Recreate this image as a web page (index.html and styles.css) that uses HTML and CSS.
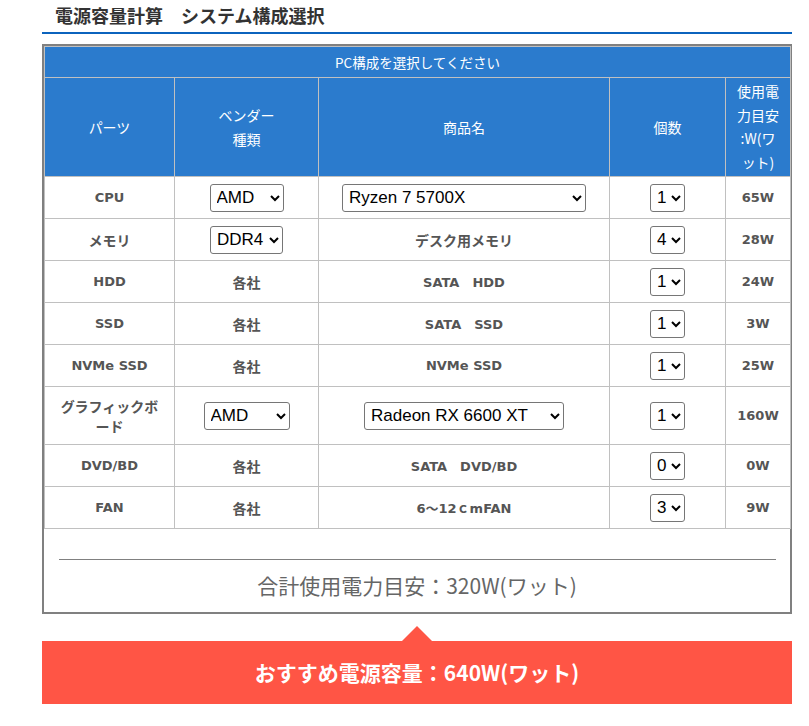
FILE: index.html
```html
<!DOCTYPE html>
<html lang="ja">
<head>
<meta charset="utf-8">
<title>電源容量計算</title>
<link rel="stylesheet" href="styles.css">
</head>
<body>
<div class="page">
  <h2 class="title">電源容量計算　システム構成選択</h2>
  <div class="calc-box">
    <table class="parts">
      <colgroup>
        <col class="c-part"><col class="c-vendor"><col class="c-name"><col class="c-qty"><col class="c-watt">
      </colgroup>
      <thead>
        <tr class="caption-row"><th colspan="5">PC構成を選択してください</th></tr>
        <tr class="head-row">
          <th>パーツ</th>
          <th>ベンダー<br>種類</th>
          <th>商品名</th>
          <th>個数</th>
          <th class="watt-head">使用電<br>力目安<br>:W(ワ<br>ット)</th>
        </tr>
      </thead>
      <tbody>
        <tr>
          <td>CPU</td>
          <td><select class="sel sel-vendor"><option>AMD</option><option>Intel</option></select></td>
          <td><select class="sel sel-cpu"><option>Ryzen 7 5700X</option></select></td>
          <td><select class="sel sel-qty"><option>1</option></select></td>
          <td>65W</td>
        </tr>
        <tr>
          <td class="ja">メモリ</td>
          <td><select class="sel sel-mem"><option>DDR4</option></select></td>
          <td class="ja">デスク用メモリ</td>
          <td><select class="sel sel-qty"><option>4</option></select></td>
          <td>28W</td>
        </tr>
        <tr>
          <td>HDD</td>
          <td class="ja">各社</td>
          <td>SATA　HDD</td>
          <td><select class="sel sel-qty"><option>1</option></select></td>
          <td>24W</td>
        </tr>
        <tr>
          <td>SSD</td>
          <td class="ja">各社</td>
          <td>SATA　SSD</td>
          <td><select class="sel sel-qty"><option>1</option></select></td>
          <td>3W</td>
        </tr>
        <tr>
          <td>NVMe SSD</td>
          <td class="ja">各社</td>
          <td>NVMe SSD</td>
          <td><select class="sel sel-qty"><option>1</option></select></td>
          <td>25W</td>
        </tr>
        <tr class="tall">
          <td class="ja">グラフィックボード</td>
          <td><select class="sel sel-gpu-vendor"><option>AMD</option></select></td>
          <td><select class="sel sel-gpu"><option>Radeon RX 6600 XT</option></select></td>
          <td><select class="sel sel-qty"><option>1</option></select></td>
          <td>160W</td>
        </tr>
        <tr>
          <td>DVD/BD</td>
          <td class="ja">各社</td>
          <td>SATA　DVD/BD</td>
          <td><select class="sel sel-qty"><option>0</option></select></td>
          <td>0W</td>
        </tr>
        <tr>
          <td>FAN</td>
          <td class="ja">各社</td>
          <td>6〜12ｃmFAN</td>
          <td><select class="sel sel-qty"><option>3</option></select></td>
          <td>9W</td>
        </tr>
      </tbody>
    </table>
    <div class="total-line"></div>
    <p class="total-text">合計使用電力目安：320W(ワット)</p>
  </div>
  <div class="recommend">おすすめ電源容量：640W(ワット)</div>
</div>
</body>
</html>
```

FILE: styles.css
```css
* { box-sizing: border-box; }

body {
  margin: 0;
  background: #fff;
  font-family: "Noto Sans CJK JP", sans-serif;
}

.page {
  margin-left: 42px;
  width: 750px;
}

.title {
  margin: 0;
  height: 34px;
  padding-left: 13px;
  font-size: 18px;
  line-height: 30px;
  font-weight: bold;
  color: #333;
  border-bottom: 2px solid #0b63bd;
}

.calc-box {
  margin-top: 10px;
  border: 2px solid #808080;
  background: #fff;
}

.parts {
  border-collapse: collapse;
  table-layout: fixed;
  width: 746px;
  border: 1px solid #c0c0c0;
}

.c-part { width: 130px; }
.c-vendor { width: 144px; }
.c-name { width: 291px; }
.c-qty { width: 116px; }
.c-watt { width: 65px; }

.parts th {
  background: #2b7bcd;
  color: #fff;
  font-weight: normal;
  font-size: 14px;
  line-height: 24px;
  border: 1px solid #c0c0c0;
  padding: 1px 10px;
  text-align: center;
  vertical-align: middle;
}

.caption-row th {
  height: 31px;
  padding: 0;
  font-size: 13.5px;
}

.head-row th { height: 99px; }

.parts th.watt-head {
  padding: 1px 2px;
  line-height: 23.5px;
}

.parts td {
  height: 42px;
  padding: 0 10px;
  border: 1px solid #c0c0c0;
  text-align: center;
  vertical-align: middle;
  font-family: "DejaVu Sans", "Noto Sans CJK JP", sans-serif;
  font-size: 13px;
  font-weight: bold;
  color: #555;
}

.parts td.ja {
  font-family: "Noto Sans CJK JP", sans-serif;
  font-size: 14px;
  line-height: 20px;
}

.parts tr.tall td { height: 58px; }

.sel {
  height: 28px;
  font-family: "Liberation Sans", Arial, sans-serif;
  font-size: 17px;
  color: #000;
  background: #fff;
  border: 1px solid #767676;
  border-radius: 3px;
  padding: 0 0 0 2px;
  vertical-align: middle;
}

.sel-vendor { width: 74px; }
.sel-mem { width: 73px; }
.sel-gpu-vendor { width: 86px; }
.sel-cpu { width: 244px; }
.sel-gpu { width: 200px; }
.sel-qty { width: 35px; }

.total-line {
  margin: 30px 14px 0 15px;
  border-top: 1px solid #808080;
}

.total-text {
  margin: 10px 0 0;
  padding-bottom: 12px;
  text-align: center;
  font-size: 21px;
  line-height: 30px;
  color: #666;
}

.recommend {
  position: relative;
  margin-top: 27px;
  height: 63px;
  background: #ff5545;
  color: #fff;
  font-size: 21px;
  font-weight: bold;
  line-height: 63px;
  text-align: center;
}

.recommend::before {
  content: "";
  position: absolute;
  left: 50%;
  top: -15px;
  margin-left: -15px;
  border-left: 15px solid transparent;
  border-right: 15px solid transparent;
  border-bottom: 15px solid #ff5545;
}
```
